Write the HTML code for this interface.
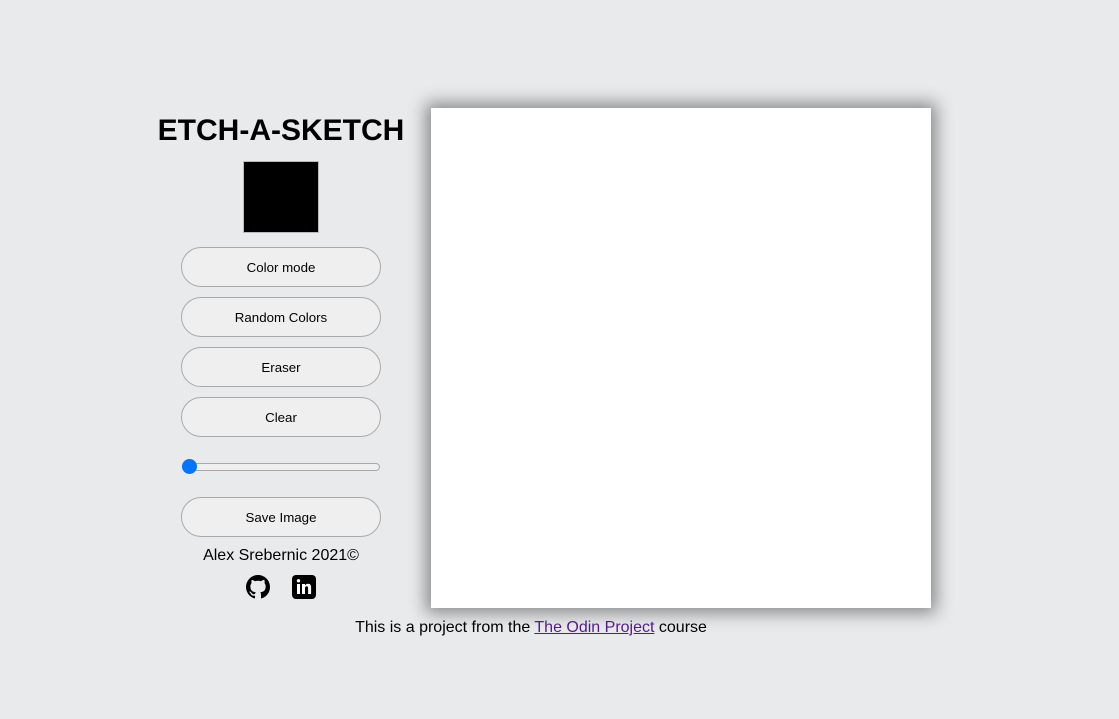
<!DOCTYPE html>
<html><head><style>
body{margin:0;background:#e9eaec;font-family:"Liberation Sans",sans-serif;width:1119px;height:719px;position:relative;overflow:hidden}
h1{position:absolute;left:131px;width:300px;top:113px;margin:0;text-align:center;font-size:30px;font-weight:bold;line-height:36px}
.sw{position:absolute;left:243px;top:161px;width:74px;height:70px;background:#000;border:1px solid #bbb}
.b{position:absolute;left:181px;width:198px;height:38px;border:1px solid #aaa;border-radius:20px;background:#efefef;font-size:13.3px;text-align:center;line-height:39px;color:#000}
.board{position:absolute;left:431px;top:108px;width:500px;height:500px;background:#fff;box-shadow:0 0 16px 5px rgba(0,0,0,.42)}
.track{position:absolute;left:183px;top:463px;width:195px;height:6px;border:1px solid #aaa;border-radius:4px;background:#efefef}
.thumb{position:absolute;left:182px;top:459px;width:15px;height:15px;border-radius:50%;background:#0075ff}
.cr{position:absolute;left:131px;width:300px;top:547px;text-align:center;font-size:16px}
.ft{position:absolute;left:0;width:1062px;top:619px;text-align:center;font-size:16px}
a{color:#551a8b}
</style></head><body>
<h1>ETCH-A-SKETCH</h1>
<div class="sw"></div>
<div class="b" style="top:247px">Color mode</div>
<div class="b" style="top:297px">Random Colors</div>
<div class="b" style="top:347px">Eraser</div>
<div class="b" style="top:397px">Clear</div>
<div class="track"></div><div class="thumb"></div>
<div class="b" style="top:497px">Save Image</div>
<div class="cr">Alex Srebernic 2021©</div>
<svg style="position:absolute;left:246px;top:575px" width="24" height="24" viewBox="0 0 16 16"><path fill="#000" d="M8 0C3.58 0 0 3.58 0 8c0 3.540 2.29 6.53 5.47 7.59.4.07.55-.17.55-.38 0-.19-.01-.82-.01-1.490-2.01.37-2.53-.49-2.69-.94-.09-.23-.48-.94-.82-1.13-.28-.15-.68-.52-.01-.53.63-.01 1.08.58 1.23.82.72 1.21 1.870.87 2.33.66.07-.52.28-.87.51-1.07-1.78-.2-3.64-.89-3.64-3.95 0-.87.31-1.59.82-2.15-.08-.2-.36-1.02.08-2.12 0 0 .67-.21 2.2.82.64-.18 1.32-.27 2-.27.68 0 1.36.09 2 .27 1.53-1.04 2.2-.82 2.2-.82.44 1.1.16 1.92.08 2.12.51.56.82 1.27.82 2.15 0 3.07-1.87 3.75-3.65 3.95.29.25.54.73.54 1.48 0 1.07-.01 1.93-.01 2.2 0 .21.15.46.55.38A8.013 8.013 0 0016 8c0-4.42-3.58-8-8-8z"/></svg>
<svg style="position:absolute;left:292px;top:575px" width="24" height="24" viewBox="0 0 24 24"><rect width="24" height="24" rx="4" fill="#000"/><rect x="5" y="9" width="3" height="10" fill="#fff"/><circle cx="6.5" cy="5.8" r="1.7" fill="#fff"/><path fill="#fff" d="M10 9h3v1.5c.6-1 1.7-1.7 3.1-1.7 2.3 0 3 1.5 3 3.7V19h-3v-5.8c0-1.2-.4-1.900-1.4-1.9-1.1 0-1.7.8-1.7 2V19h-3z"/></svg>
<div class="board"></div>
<div class="ft">This is a project from the <a href="#">The Odin Project</a> course</div>
</body></html>
